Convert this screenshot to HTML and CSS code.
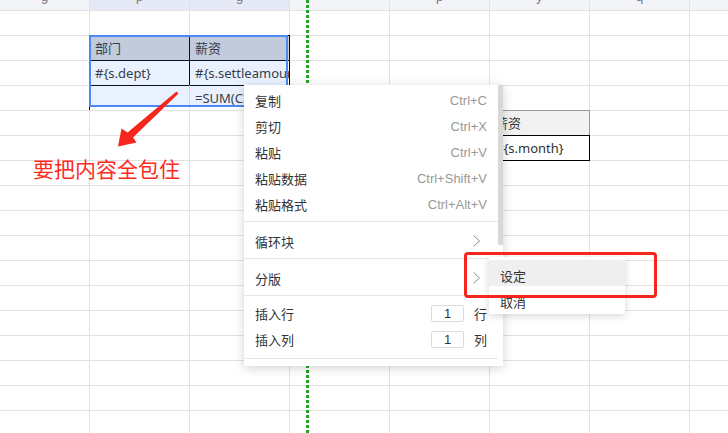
FILE: index.html
```html
<!DOCTYPE html>
<html>

<head>
  <meta charset="utf-8">
  <title>报表模板设计</title>
  <link rel="stylesheet" href="styles.css">
</head>

<body>

  <div class="sheet">
    <div class="col-head"><span>g</span></div>
    <div class="col-head sel"><span>p</span></div>
    <div class="col-head sel"><span>g</span></div>
    <div class="col-head"></div>
    <div class="col-head"><span>p</span></div>
    <div class="col-head"><span>y</span></div>
    <div class="col-head"><span>q</span></div>
    <div class="col-head"></div>

    <div class="block block-main">
      <div class="cell head">部门</div>
      <div class="cell head edge">薪资</div>
      <div class="cell data">#{s.dept}</div>
      <div class="cell data edge">#{s.settleamount}</div>
      <div class="cell foot"></div>
      <div class="cell foot inner">=SUM(C3)</div>
      <div class="selection"></div>
    </div>

    <div class="block block-side">
      <div class="cell side-head">薪资</div>
      <div class="cell side-data">#{s.month}</div>
    </div>
  </div>

  <div class="page-break"></div>

  <div class="ctx">
    <div class="ctx-body">
      <div class="ctx-group first">
        <div class="ctx-item"><span class="label">复制</span><span class="key">Ctrl+C</span></div>
        <div class="ctx-item"><span class="label">剪切</span><span class="key">Ctrl+X</span></div>
        <div class="ctx-item"><span class="label">粘贴</span><span class="key">Ctrl+V</span></div>
        <div class="ctx-item"><span class="label">粘贴数据</span><span class="key">Ctrl+Shift+V</span></div>
        <div class="ctx-item"><span class="label">粘贴格式</span><span class="key">Ctrl+Alt+V</span></div>
      </div>
      <div class="ctx-group">
        <div class="ctx-item">
          <span class="label">循环块</span>
          <svg class="chev" width="7" height="12" viewBox="0 0 7 12"><polyline points="0.5,0.5 6.5,6 0.5,11.5" fill="none" stroke="#8a8a8a" stroke-width="1"/></svg>
        </div>
      </div>
      <div class="ctx-group">
        <div class="ctx-item">
          <span class="label">分版</span>
          <svg class="chev" width="7" height="12" viewBox="0 0 7 12"><polyline points="0.5,0.5 6.5,6 0.5,11.5" fill="none" stroke="#8a8a8a" stroke-width="1"/></svg>
        </div>
      </div>
      <div class="ctx-group numbers">
        <div class="ctx-item"><span class="label">插入行</span><input class="num" value="1"><span class="unit">行</span></div>
        <div class="ctx-item"><span class="label">插入列</span><input class="num" value="1"><span class="unit">列</span></div>
      </div>
      <div class="ctx-group">
        <div class="ctx-item"><span class="label">删除行</span></div>
        <div class="ctx-item"><span class="label">删除列</span></div>
      </div>
    </div>
    <div class="ctx-bar">
      <div class="ctx-thumb"></div>
    </div>
  </div>

  <div class="sub">
    <div class="sub-item hover">设定</div>
    <div class="sub-item">取消</div>
  </div>

  <div class="mark-box"></div>

  <svg class="mark-arrow" width="75" height="65" viewBox="0 0 75 65">
    <polygon points="66.5,6.5 68.5,8.5 23,52.5 26.5,57.5 8,61.5 11.5,43.5 17.5,47.5" fill="#f5261c"/>
  </svg>

  <div class="note">要把内容全包住</div>

</body>

</html>
```

FILE: styles.css
```css
:root {
  --grid: #e2e2e2;
  --text: #333;
  --mark: #f5261c;
}

* {
  box-sizing: border-box;
}

body {
  margin: 0;
  width: 728px;
  height: 433px;
  overflow: hidden;
  position: relative;
  background: #fff;
  color: var(--text);
  font-family: "Noto Sans", "Noto Sans CJK SC", sans-serif;
  font-size: 13px;
}

/* sheet grid */

.sheet {
  display: grid;
  grid-template-columns: 89px repeat(6, 100px) 39px;
  grid-template-rows: 10px repeat(17, 25px);
  background-image:
    linear-gradient(90deg, var(--grid) 1px, transparent 1px),
    linear-gradient(var(--grid) 1px, transparent 1px);
  background-size: 100px 100%, 100% 25px;
  background-position: 89px 0, 0 10px;
}

.col-head {
  background: #f3f4f8;
  border-left: 1px solid var(--grid);
  overflow: hidden;
  text-align: center;
  color: #777;
  font-family: "Liberation Sans", sans-serif;
}

.col-head:first-child {
  border-left: none;
}

.col-head.sel {
  background: #e4e9f5;
}

.col-head span {
  display: block;
  line-height: 13px;
  margin-top: -10px;
}

.block {
  position: relative;
  display: grid;
  grid-template-columns: 100px;
  grid-auto-rows: 25px;
}

.block-main {
  grid-column: 2 / 4;
  grid-row: 3 / 6;
  grid-template-columns: 100px 100px;
}

.block-side {
  grid-column: 6;
  grid-row: 6 / 8;
}

.cell {
  padding-left: 5px;
  line-height: 24px;
  white-space: nowrap;
  overflow: hidden;
  border-left: 1px solid #000;
  border-top: 1px solid #000;
}

.cell.head {
  background: #d3d4d8;
}

.cell.edge {
  box-shadow: 1px 0 0 #000;
}

.cell.data.edge {
  padding-right: 1px;
}

.cell.foot.inner {
  border-left-color: var(--grid);
}

.selection {
  position: absolute;
  left: 0;
  top: 0;
  width: 199px;
  height: 72px;
  border: 2px solid #4a8af4;
  background: rgba(74, 138, 244, 0.12);
}

.side-head {
  background: #f2f2f2;
  border-color: #9a9a9a;
  box-shadow: 1px 0 0 #9a9a9a;
}

.side-data {
  box-shadow: 1px 0 0 #000, 0 1px 0 #000, 1px 1px 0 #000;
}

.page-break {
  position: absolute;
  left: 306px;
  top: 0;
  width: 3px;
  height: 433px;
  background: repeating-linear-gradient(#22a322 0 3px, transparent 3px 5px);
}

/* context menu */

.ctx {
  position: absolute;
  left: 244px;
  top: 85px;
  width: 259px;
  height: 281px;
  display: flex;
  overflow: hidden;
  background: #fff;
  box-shadow: 0 2px 10px rgba(0, 0, 0, 0.18);
  font-family: "Noto Sans CJK SC", sans-serif;
}

.ctx-body {
  flex: 1;
}

.ctx-bar {
  width: 5px;
}

.ctx-thumb {
  height: 160px;
  background: #d8d8d8;
}

.ctx-group {
  padding: 8px 0 2px;
  border-bottom: 1px solid #e6e6e6;
}

.ctx-group.first {
  padding-top: 4px;
}

.ctx-group.numbers {
  padding: 6px 0 4px;
}

.ctx-item {
  display: flex;
  align-items: center;
  height: 26px;
  padding: 0 11px 4px;
}

.label {
  flex: 1;
}

.key {
  color: #999;
  font-family: "Liberation Sans", sans-serif;
}

.chev {
  margin-right: 7px;
}

.num {
  width: 33px;
  height: 17px;
  margin-right: 10px;
  padding: 0;
  border: 1px solid #dcdcdc;
  border-radius: 2px;
  text-align: center;
  color: var(--text);
  font-family: "Liberation Sans", sans-serif;
  font-size: 13px;
}

.unit {
  width: 13px;
}

/* sub menu */

.sub {
  position: absolute;
  left: 489px;
  top: 257px;
  width: 136px;
  padding: 3px 0 2px;
  background: #fff;
  box-shadow: 0 2px 8px rgba(0, 0, 0, 0.16);
  font-family: "Noto Sans CJK SC", sans-serif;
}

.sub-item {
  height: 26px;
  line-height: 26px;
  padding: 3px 0 0 11px;
}

.sub-item.hover {
  background: #efefef;
}

/* annotations */

.mark-box {
  position: absolute;
  left: 464px;
  top: 252px;
  width: 193px;
  height: 46px;
  border: 3px solid var(--mark);
  border-radius: 4px;
}

.mark-arrow {
  position: absolute;
  left: 110px;
  top: 85px;
}

.note {
  position: absolute;
  left: 33px;
  top: 155px;
  font-family: "Noto Sans CJK SC", sans-serif;
  font-size: 21px;
  line-height: 26px;
  color: #ff2a1f;
}
```
